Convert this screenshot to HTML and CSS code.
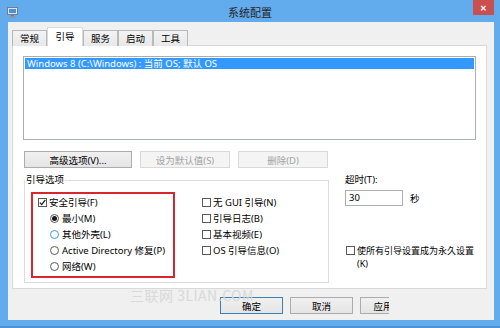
FILE: index.html
```html
<!DOCTYPE html>
<html lang="zh-CN">
<head>
  <meta charset="UTF-8" />
  <title>系统配置</title>
  <link rel="stylesheet" href="styles.css">
</head>
<body>
  <div class="window">
    <div class="titlebar">
      <svg class="app-icon" width="11" height="11" viewBox="0 0 11 11">
        <rect x="0.5" y="0.5" width="10" height="7" fill="#dfe6ee" stroke="#6f7f90"/>
        <rect x="2" y="2" width="7" height="4" fill="#4f8fd0"/>
        <rect x="4" y="8" width="3" height="1.5" fill="#6f7f90"/>
        <rect x="2" y="9.5" width="7" height="1.5" fill="#8a98a8"/>
      </svg>
      <div class="title">系统配置</div>
      <div class="close">&#x2715;</div>
    </div>

    <div class="client">
      <div class="tabs">
        <div class="tab">常规</div>
        <div class="tab active">引导</div>
        <div class="tab">服务</div>
        <div class="tab">启动</div>
        <div class="tab">工具</div>
      </div>

      <div class="panel">
        <div class="listbox">
          <div class="list-item selected">Windows 8 (C:\Windows) : 当前 OS; 默认 OS</div>
        </div>

        <div class="btn-row">
          <button class="btn btn-advanced">高级选项(V)...</button>
          <button class="btn btn-wide" disabled>设为默认值(S)</button>
          <button class="btn btn-wide" disabled>删除(D)</button>
        </div>

        <div class="options">
          <fieldset class="group">
            <legend>引导选项</legend>
            <div class="boot-cols">
              <div class="safe-boot">
                <div class="row"><span class="check checked"><svg width="7" height="7" viewBox="0 0 7 7"><path d="M0.8 3.6 L2.7 5.6 L6.3 1" fill="none" stroke="#222" stroke-width="1.3"/></svg></span>安全引导(F)</div>
                <div class="row sub"><span class="radio on"></span>最小(M)</div>
                <div class="row sub"><span class="radio hover"></span>其他外壳(L)</div>
                <div class="row sub"><span class="radio"></span>Active Directory 修复(P)</div>
                <div class="row sub"><span class="radio"></span>网络(W)</div>
              </div>
              <div class="flags">
                <div class="row"><span class="check"></span>无 GUI 引导(N)</div>
                <div class="row"><span class="check"></span>引导日志(B)</div>
                <div class="row"><span class="check"></span>基本视频(E)</div>
                <div class="row"><span class="check"></span>OS 引导信息(O)</div>
              </div>
            </div>
          </fieldset>

          <div class="side">
            <div class="side-label">超时(T):</div>
            <div class="timeout-row">
              <div class="input">30</div>
              <span class="unit">秒</span>
            </div>
            <div class="perm">
              <span class="check"></span>
              <span class="perm-text">使所有引导设置成为永久设置(K)</span>
            </div>
          </div>
        </div>
      </div>

      <div class="footer">
        <button class="btn btn-footer default">确定</button>
        <button class="btn btn-footer">取消</button>
        <div class="clip"><button class="btn btn-footer btn-cut">应用</button></div>
      </div>
    </div>

    <div class="watermark">三联网 3LIAN.COM</div>
  </div>
</body>
</html>
```

FILE: styles.css
```css
body {
  margin: 0;
  width: 500px;
  height: 328px;
  overflow: hidden;
  font-family: "Noto Sans", "Noto Sans CJK SC", sans-serif;
  font-size: 9.5px;
  color: #000;
}
.window {
  position: relative;
  width: 500px;
  height: 328px;
  box-sizing: border-box;
  background: #62abed;
  border-bottom: 2px solid #4b93d6;
}
.titlebar {
  height: 22px;
  display: grid;
  grid-template-columns: 1fr auto 1fr;
  align-items: center;
}
.app-icon {
  margin-left: 7px;
  margin-top: 2px;
}
.title {
  font-family: "Noto Sans CJK SC", sans-serif;
  font-size: 11px;
  color: #262626;
  margin-top: 2px;
}
.close {
  justify-self: end;
  align-self: start;
  width: 21px;
  height: 15px;
  margin-right: 6px;
  background: #c9504f;
  color: #fff;
  font-size: 8px;
  font-weight: bold;
  display: flex;
  align-items: center;
  justify-content: center;
}
.client {
  margin-left: 8px;
  width: 486px;
  height: 298px;
  box-sizing: border-box;
  background: #f0f0f0;
  padding: 5px 7px 0 4px;
}
.tabs {
  display: flex;
  align-items: flex-end;
  height: 19px;
  margin-bottom: -1px;
  position: relative;
  z-index: 1;
}
.tab {
  width: 35px;
  height: 16px;
  box-sizing: border-box;
  border: 1px solid #b9b9b9;
  border-bottom: none;
  background: linear-gradient(#f3f3f3, #e8e8e8);
  text-align: center;
  line-height: 15px;
  font-family: "Noto Sans CJK SC", sans-serif;
}
.tab.active {
  width: 36px;
  height: 19px;
  background: #fff;
  border-color: #d9d9d9;
  line-height: 17px;
}
.panel {
  height: 244px;
  box-sizing: border-box;
  background: #fff;
  border: 1px solid #d9d9d9;
  padding: 10px;
}
.listbox {
  height: 84px;
  box-sizing: border-box;
  border: 1px solid #a9aeb5;
  padding: 1px;
}
.list-item {
  height: 11px;
  line-height: 11px;
  padding-left: 2px;
}
.list-item.selected {
  background: #3399ff;
  color: #fff;
}
.btn-row {
  display: flex;
  gap: 8px;
  margin-top: 11px;
  padding-left: 1px;
}
.btn {
  height: 17px;
  box-sizing: border-box;
  padding: 0;
  border: 1px solid #acacac;
  background: linear-gradient(#f0f0f0, #e5e5e5);
  font: inherit;
  color: #000;
}
.btn:disabled {
  background: #f4f4f4;
  border-color: #d9d9d9;
  color: #a3a3a3;
}
.btn-advanced {
  width: 108px;
}
.btn-wide {
  width: 90px;
}
.options {
  display: flex;
  gap: 16px;
  margin-top: 6px;
  padding-left: 1px;
}
.group {
  flex: none;
  width: 305px;
  margin: 0;
  padding: 0 6px 4px;
  box-sizing: border-box;
  border: 1px solid #dcdcdc;
}
.group legend {
  padding: 0 1px;
  margin-left: -6px;
  line-height: 12px;
}
.boot-cols {
  display: flex;
  gap: 26px;
  margin-top: 6px;
}
.safe-boot {
  width: 144px;
  box-sizing: border-box;
  border: 2px solid #d7262d;
  padding: 0 0 2px 4px;
}
.flags {
  margin-top: 2px;
}
.row {
  height: 16px;
  display: flex;
  align-items: center;
  white-space: nowrap;
}
.row.sub {
  padding-left: 13px;
}
.check {
  width: 9px;
  height: 9px;
  box-sizing: border-box;
  border: 1px solid #5a5a5a;
  background: #fff;
  margin: 0 2px 0 1px;
  display: flex;
  align-items: center;
  justify-content: center;
  flex: none;
}
.radio {
  width: 9px;
  height: 9px;
  box-sizing: border-box;
  border: 1px solid #5a5a5a;
  border-radius: 50%;
  background: #fff;
  margin-right: 3px;
  display: flex;
  align-items: center;
  justify-content: center;
  flex: none;
}
.radio.on::after {
  content: "";
  width: 5px;
  height: 5px;
  border-radius: 50%;
  background: #1a1a1a;
}
.radio.hover {
  border-color: #3c9ae6;
}
.side {
  flex: none;
  width: 138px;
  display: flex;
  flex-direction: column;
}
.side-label {
  line-height: 12px;
}
.timeout-row {
  display: flex;
  align-items: center;
  margin-top: 4px;
}
.input {
  width: 58px;
  height: 16px;
  box-sizing: border-box;
  border: 1px solid #abadb3;
  padding-left: 3px;
  line-height: 14px;
}
.unit {
  margin-left: 7px;
}
.perm {
  display: flex;
  align-items: flex-start;
  margin-top: 38px;
}
.perm .check {
  margin-top: 2px;
}
.perm-text {
  width: 120px;
  font-size: 9px;
  line-height: 13px;
}
.footer {
  display: flex;
  gap: 7px;
  margin-top: 8px;
  padding-left: 208px;
}
.btn-footer {
  width: 63px;
  height: 17px;
}
.btn-footer.default {
  border-color: #3c7fb1;
}
.clip {
  width: 29px;
  overflow: hidden;
  flex: none;
}
.btn-cut {
  width: 46px;
}
.watermark {
  position: absolute;
  left: 130px;
  top: 285px;
  font-family: "Noto Sans CJK SC", sans-serif;
  font-size: 14px;
  color: #d9d9d9;
  letter-spacing: 0.5px;
}
```
